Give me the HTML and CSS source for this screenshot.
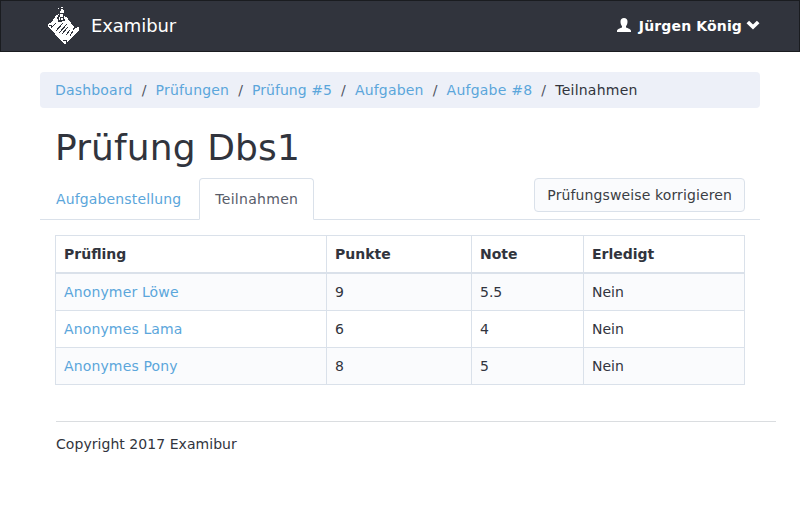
FILE: index.html
```html
<!DOCTYPE html>
<html lang="de">
<head>
<meta charset="utf-8">
<title>Examibur</title>
<link rel="stylesheet" href="styles.css">
</head>
<body>
<nav class="navbar">
  <a class="brand" href="#">
    <svg class="logo" width="32" height="38" viewBox="0 0 32 38" shape-rendering="crispEdges">
      <path fill="#fff" d="M8 8L11 7L18 10L20 12L26 20L25 23L30 20L31 21L31 23L17 37L15 36L0 19L1 16L4 15Z"/>
      <path fill="#31343d" d="M11 5h6v3h-1v4h1v2h-3v1h-4v-3h-1v-2h1v-2h1z"/>
      <path fill="#fff" d="M13 0h2v1h-2zM10 1h1v1h-1zM13 2h2v1h1v3h-4v-2h1zM12 7h3v3h-3zM11 10h1v3h-1zM13 11h2v2h-2z"/>
      <path fill="none" stroke="#31343d" d="M1 18h2v2h1M4 20l4-4M8 24l7-8M11 26l8-9M14 27l6-7M18 28l4-5M22 29l3-5M15 33h3v3"/>
    </svg>
    <span class="title">Examibur</span>
  </a>
  <a class="user" href="#">
    <svg width="14" height="14" viewBox="0 0 14 14"><path fill="#fff" d="M7 0C9.2 0 10.5 1.3 10.5 3.6C10.5 5.6 9.9 7.2 9 8.2V9.6C10.8 10.4 14 11.2 14 13V14H0V13C0 11.2 3.2 10.4 5 9.6V8.2C4.1 7.2 3.5 5.6 3.5 3.6C3.5 1.3 4.8 0 7 0Z"/></svg>
    <span class="name">Jürgen König</span>
    <svg class="chevron" width="14" height="10" viewBox="0 0 14 10"><path fill="none" stroke="#fff" stroke-width="3.7" d="M1.8 2L7 7L12.2 2"/></svg>
  </a>
</nav>
<main class="container">
  <ol class="breadcrumb">
    <li><a href="#">Dashboard</a></li><li><a href="#">Prüfungen</a></li><li class="tight"><a href="#">Prüfung #5</a></li><li><a href="#">Aufgaben</a></li><li class="wide"><a href="#">Aufgabe #8</a></li><li class="wide">Teilnahmen</li>
  </ol>
  <h1>Prüfung Dbs1</h1>
  <div class="tabs">
    <a class="tab" href="#">Aufgabenstellung</a>
    <a class="tab active" href="#">Teilnahmen</a>
    <button class="button" type="button">Prüfungsweise korrigieren</button>
  </div>
  <table>
    <colgroup><col class="c1"><col class="c2"><col class="c3"><col class="c4"></colgroup>
    <thead><tr><th>Prüfling</th><th>Punkte</th><th>Note</th><th>Erledigt</th></tr></thead>
    <tbody>
      <tr><td><a href="#">Anonymer Löwe</a></td><td>9</td><td>5.5</td><td>Nein</td></tr>
      <tr><td><a href="#">Anonymes Lama</a></td><td>6</td><td>4</td><td>Nein</td></tr>
      <tr><td><a href="#">Anonymes Pony</a></td><td>8</td><td>5</td><td>Nein</td></tr>
    </tbody>
  </table>
  <footer>Copyright 2017 Examibur</footer>
</main>
</body>
</html>
```
FILE: styles.css
```css
* { box-sizing: border-box; }
body {
  margin: 0;
  font: 14px/20px "DejaVu Sans", sans-serif;
  color: #31343d;
  background: #fff;
}
a { color: #5ba6db; text-decoration: none; }
.navbar {
  display: flex;
  justify-content: space-between;
  height: 52px;
  padding: 0 39px 0 47px;
  background: #31343d;
  border: 1px solid #1a1c20;
}
.brand { display: flex; align-items: center; gap: 11px; color: #fff; font-size: 18px; }
.title { letter-spacing: -0.08px; }
.logo { margin-top: -1px; }
.user { display: flex; align-items: center; color: #fff; font-weight: bold; }
.user svg { margin-top: -2px; }
.name { margin: 0 4px 0 8px; letter-spacing: 0.14px; }
.container { width: 720px; margin: 20px auto 0; }
.breadcrumb {
  display: flex;
  margin: 0;
  padding: 8px 15px;
  list-style: none;
  background: #edf0f8;
  border-radius: 4px;
  letter-spacing: 0.19px;
}
.breadcrumb .tight { letter-spacing: 0.05px; }
.breadcrumb .wide { letter-spacing: 0.23px; }
.breadcrumb li + li::before { content: "/"; padding: 0 9px; color: #4f535f; }
h1 { margin: 20px 15px 10px; font-size: 36px; line-height: 40px; font-weight: normal; letter-spacing: 0.12px; }
.tabs { display: flex; height: 42px; padding-right: 15px; border-bottom: 1px solid #dae1ea; }
.tab {
  height: 42px;
  margin-right: 2px;
  padding: 10px 15px;
  border: 1px solid transparent;
  border-radius: 4px 4px 0 0;
  letter-spacing: 0.14px;
}
.active { color: #585c69; background: #fff; border-color: #dae1ea #dae1ea #fff; letter-spacing: 0.29px; }
.button {
  height: 34px;
  margin: 0 0 0 auto;
  padding: 6px 12px;
  font: inherit;
  letter-spacing: 0.12px;
  color: #3b3e44;
  background: #fafbfd;
  border: 1px solid #dae1ea;
  border-radius: 4px;
}
table { width: 689px; margin: 15px 15px 0; table-layout: fixed; border-collapse: collapse; }
.c1 { width: 271px; }
.c2 { width: 145px; }
.c3 { width: 112px; }
.c4 { width: 161px; }
th, td { padding: 8px; text-align: left; border: 1px solid #dae1ea; }
td a { letter-spacing: 0.14px; }
th { border-bottom-width: 2px; }
tbody tr:nth-child(odd) { background: #fafbfd; }
footer {
  width: 720px;
  margin: 36px 0 0 16px;
  padding-top: 12px;
  border-top: 1px solid #dadde0;
  letter-spacing: 0.05px;
}
```
